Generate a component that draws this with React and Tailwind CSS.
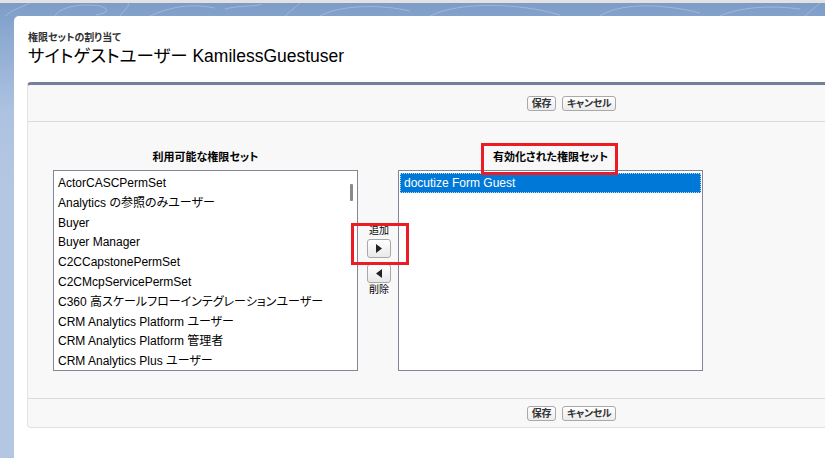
import React from 'react';

const jp = "font-['Liberation_Sans','Noto_Sans_CJK_JP',sans-serif] [font-feature-settings:'palt']";

const available = [
  'ActorCASCPermSet',
  'Analytics の参照のみユーザー',
  'Buyer',
  'Buyer Manager',
  'C2CCapstonePermSet',
  'C2CMcpServicePermSet',
  'C360 高スケールフローインテグレーションユーザー',
  'CRM Analytics Platform ユーザー',
  'CRM Analytics Platform 管理者',
  'CRM Analytics Plus ユーザー',
];

const SmallButton = ({ children }) => (
  <button className="h-[15px] px-[4px] rounded-[3px] border border-[#a9a9a9] bg-gradient-to-b from-white to-[#ececec] text-[10px] leading-[13px] tracking-[-0.4px] font-bold text-[#333]">
    {children}
  </button>
);

const ButtonRow = () => (
  <div className="flex justify-center gap-[6px]">
    <SmallButton>保存</SmallButton>
    <SmallButton>キャンセル</SmallButton>
  </div>
);

const ArrowButton = ({ dir }) => (
  <button className="w-[24px] h-[19px] rounded-[3px] border border-[#a8a8a8] bg-gradient-to-b from-white to-[#e9e9e9] flex items-center justify-center">
    <svg width="6" height="9" viewBox="0 0 6 9">
      {dir === 'right' ? <path d="M0 0 L6 4.5 L0 9 Z" fill="#222" /> : <path d="M6 0 L0 4.5 L6 9 Z" fill="#222" />}
    </svg>
  </button>
);

export default function App() {
  return (
    <div className={`relative w-[825px] h-[458px] overflow-hidden bg-[linear-gradient(to_bottom,#7b9bc6_0px,#8eabd2_40px,#adc2e0_110px,#b3c7e3_180px)] ${jp}`}>
      <div className="h-[3px] bg-[#e2e2e2]" />
      <svg className="absolute left-0 top-[3px]" width="825" height="13" viewBox="0 0 825 13">
        <g fill="none" stroke="#ffffff" strokeOpacity="0.25" strokeWidth="1">
          <path d="M5 13 C15 5 25 3 30 0" />
          <path d="M55 13 C60 4 80 0 100 3 C110 6 108 10 96 12" />
          <path d="M120 13 C125 6 130 3 128 0" />
          <path d="M150 13 C170 4 190 0 215 5" />
          <path d="M225 6 C240 2 255 4 262 1" />
          <path d="M285 13 L300 0" />
          <path d="M320 13 C340 2 380 1 410 8" />
          <path d="M430 13 C460 -2 520 0 560 12" />
          <path d="M600 13 C620 0 660 0 700 10" />
          <path d="M720 13 C740 4 770 2 800 6" />
          <path d="M805 13 L820 0" />
        </g>
      </svg>
      <div className="pt-[13px] pl-[14px]">
        <div className="bg-white rounded-tl-[5px] h-[442px] pl-[13px] pt-[16px]">
          <div className="text-[10px] leading-[12px] font-bold text-[#333] pl-[1px]">権限セットの割り当て</div>
          <div className="mt-[1px] text-[17.5px] leading-[22px] text-black pl-[1px]">サイトゲストユーザー KamilessGuestuser</div>

          <div className="mt-[15px] w-[1088px] bg-[#f8f8f8] border-t-[3px] border-t-[#747f9a] border-l border-l-[#e3e3e3] border-b border-b-[#e0e0e0] rounded-t-[4px] rounded-b-[4px]">
            <div className="h-[37px] pt-[11px] border-b border-[#dbdbdb]">
              <ButtonRow />
            </div>

            <div className="pl-[25px] pt-[28px] pb-[27px] border-b border-[#dbdbdb]">
              <div className="grid grid-cols-[305px_40px_305px]">
                <div className="text-center text-[11px] leading-[14px] font-bold text-black mb-[6px]">利用可能な権限セット</div>
                <div />
                <div className="text-center text-[11px] leading-[14px] font-bold text-black mb-[6px]">有効化された権限セット</div>

                <div className="relative h-[201px] bg-white border border-[#858596] pt-[3px] pl-[4px] overflow-hidden">
                  {available.map((item) => (
                    <div key={item} className="h-[19.8px] text-[12px] leading-[19.8px] text-black whitespace-nowrap">{item}</div>
                  ))}
                  <div className="absolute right-[4px] top-[13px] w-[3px] h-[17px] rounded-[1px] bg-[#8a8a8a]" />
                </div>

                <div className="flex flex-col items-center pt-[55px] pl-[2px]">
                  <div className="text-[10px] leading-[12px] text-black">追加</div>
                  <div className="mt-[2px]"><ArrowButton dir="right" /></div>
                  <div className="mt-[6px]"><ArrowButton dir="left" /></div>
                  <div className="text-[10px] leading-[12px] text-black mt-[1px]">削除</div>
                </div>

                <div className="h-[201px] bg-white border border-[#858596] pt-[2px] px-[1px]">
                  <div className="h-[20px] bg-[#0078d7] outline outline-1 outline-dotted outline-[#bcd9f3] -outline-offset-1 pl-[4px] text-[12px] leading-[20px] text-white">
                    docutize Form Guest
                  </div>
                </div>
              </div>
            </div>

            <div className="pt-[7px] pb-[6px]">
              <ButtonRow />
            </div>
          </div>
        </div>
      </div>

      <div className="absolute left-[481px] top-[143px] w-[137px] h-[32px] border-[3px] border-[#ed1c24]" />
      <div className="absolute left-[351px] top-[223px] w-[58px] h-[42px] border-[3px] border-[#ed1c24]" />
    </div>
  );
}
